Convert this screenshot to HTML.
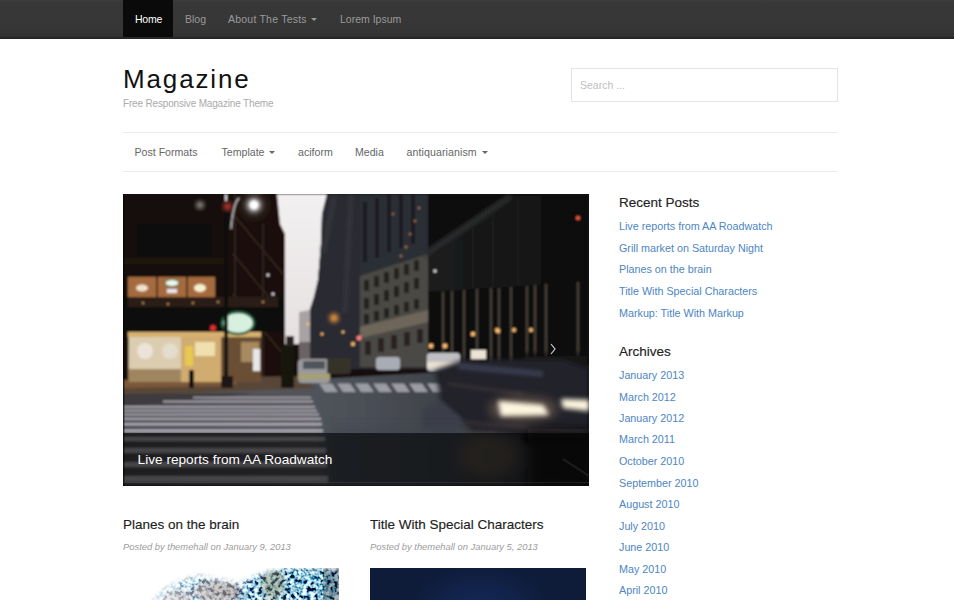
<!DOCTYPE html>
<html><head><meta charset="utf-8">
<style>
*{margin:0;padding:0;box-sizing:border-box}
html,body{width:954px;height:600px;overflow:hidden;background:#fff}
body{font-family:"Liberation Sans",sans-serif;position:relative}
.a{position:absolute;white-space:nowrap}
#nav{position:absolute;left:0;top:0;width:954px;height:39px;background:linear-gradient(#3c3c3c 0,#373737 3px,#363636 30px,#323232 36px);border-bottom:2px solid #262626}
#nav .home{position:absolute;left:123px;top:0;width:50px;height:37px;background:#0a0a0a}
.tn{font-size:10.5px;color:#9a9a9a;top:13px;line-height:12px}
.caret{display:inline-block;width:0;height:0;border-left:3px solid transparent;border-right:3px solid transparent;border-top:3px solid currentColor;vertical-align:middle;margin-left:4px;position:relative;top:-1px}
#title{left:123px;top:64px;font-size:26px;letter-spacing:1.85px;color:#111;line-height:30px}
#tag{left:123px;top:98px;font-size:10px;letter-spacing:-0.17px;color:#aaa;line-height:12px}
#search{position:absolute;left:571px;top:68px;width:267px;height:34px;border:1px solid #e4e4e4}
#search span{position:absolute;left:8px;top:10px;font-size:10.5px;color:#bdbdbd;line-height:12px}
.hr{position:absolute;left:123px;width:715px;height:1px;background:#ececec}
.sn{font-size:10.6px;color:#666;top:146px;line-height:12px}
#slider{position:absolute;left:123px;top:194px;width:466px;height:292px;background:#111;overflow:hidden}
.wh{font-size:13.5px;color:#222;line-height:16px;-webkit-text-stroke:0.15px #222}
.ln{font-size:10.75px;color:#4d86c2;line-height:12px}
.meta{font-size:9.4px;color:#9c9c9c;font-style:italic;line-height:12px}
</style></head><body>
<div id="nav"><div class="home"></div></div>
<div class="a tn" style="left:135px;color:#fff;letter-spacing:-0.25px">Home</div>
<div class="a tn" style="left:185px">Blog</div>
<div class="a tn" style="left:228px"><span style="letter-spacing:0.22px">About The Tests</span><span class="caret"></span></div>
<div class="a tn" style="left:340px">Lorem Ipsum</div>

<div class="a" id="title">Magazine</div>
<div class="a" id="tag">Free Responsive Magazine Theme</div>
<div id="search"><span>Search ...</span></div>
<div class="hr" style="top:132px"></div>
<div class="hr" style="top:171px"></div>
<div class="a sn" style="left:134.5px">Post Formats</div>
<div class="a sn" style="left:221.5px">Template<span class="caret" style="margin-left:4.5px"></span></div>
<div class="a sn" style="left:298px">aciform</div>
<div class="a sn" style="left:355px">Media</div>
<div class="a sn" style="left:406.5px"><span style="letter-spacing:0.1px">antiquarianism</span><span class="caret" style="margin-left:5px"></span></div>

<div id="slider"><svg width="466" height="292" viewBox="0 0 466 292" style="display:block">
<defs>
<filter id="b1" x="0" y="0" width="100%" height="100%"><feGaussianBlur stdDeviation="0.9"/></filter>
<filter id="b2" x="-100%" y="-100%" width="300%" height="300%"><feGaussianBlur stdDeviation="2"/></filter>
<filter id="b3" x="-150%" y="-150%" width="400%" height="400%"><feGaussianBlur stdDeviation="4"/></filter>
<filter id="b5" x="-100%" y="-200%" width="300%" height="500%"><feGaussianBlur stdDeviation="6"/></filter>
<linearGradient id="sky" x1="0" y1="0" x2="0" y2="1">
<stop offset="0" stop-color="#f2f0f1"/><stop offset="1" stop-color="#e6e0e0"/></linearGradient>
<linearGradient id="bldR" gradientUnits="userSpaceOnUse" x1="176" y1="0" x2="466" y2="0">
<stop offset="0" stop-color="#2c2b32"/><stop offset="0.45" stop-color="#2a2b33"/><stop offset="0.75" stop-color="#1a1819"/><stop offset="1" stop-color="#100e0e"/></linearGradient>
<linearGradient id="street" x1="0" y1="0" x2="1" y2="0">
<stop offset="0" stop-color="#5e6068"/><stop offset="0.5" stop-color="#4c5058"/><stop offset="1" stop-color="#2a2b30"/></linearGradient>
<linearGradient id="cw" x1="0" y1="0" x2="1" y2="0">
<stop offset="0" stop-color="#4c4a50"/><stop offset="1" stop-color="#56545a"/></linearGradient>
<linearGradient id="car" x1="0" y1="0" x2="0" y2="1">
<stop offset="0" stop-color="#3c3f46"/><stop offset="1" stop-color="#1c1d20"/></linearGradient>
</defs>
<g filter="url(#b1)">
<rect x="0" y="0" width="466" height="292" fill="#131110"/>
<!-- left building -->
<polygon points="0,0 155,0 157,30 161,40 161,200 0,200" fill="#150e0b"/>
<rect x="14" y="30" width="75" height="32" fill="#0c0908"/>
<rect x="0" y="64" width="161" height="6" fill="#1e150f"/>
<rect x="106" y="0" width="55" height="200" fill="#1c110d"/>
<g stroke="#3a2c24" stroke-width="1.2" fill="none">
<line x1="110" y1="20" x2="160" y2="80"/><line x1="110" y1="60" x2="160" y2="120"/><line x1="110" y1="100" x2="160" y2="160"/>
<line x1="112" y1="0" x2="112" y2="190"/><line x1="140" y1="30" x2="140" y2="190"/>
</g>
<circle cx="77" cy="11" r="3.5" fill="#a09c98" filter="url(#b2)"/>
<!-- sky -->
<polygon points="154,0 204,0 199,20 198,50 195,86 191,103 186,118 176,118 176,150 162,150 162,40 157,30" fill="url(#sky)"/>
<!-- distant buildings near vanishing point -->
<polygon points="176,118 187,116 187,165 176,165" fill="#a8a2a4"/>
<polygon points="176,148 187,148 187,165 176,165" fill="#6a6264"/>
<rect x="163" y="142" width="8" height="25" fill="#2a2424"/>
<!-- right tall building A -->
<polygon points="204,0 466,0 466,175 187,175 187,116 191,103 195,86 198,50 199,20" fill="url(#bldR)"/>
<g stroke="#3e4048" stroke-width="3" opacity="0.6" filter="url(#b2)">
<line x1="212" y1="0" x2="200" y2="60"/><line x1="228" y1="0" x2="222" y2="120"/>
</g>
<!-- building B -->
<polygon points="237,0 305,0 305,173 237,173" fill="#2c2e36"/>
<g fill="#1c1d22"><rect x="240" y="8" width="4" height="60"/><rect x="252" y="4" width="4" height="60"/><rect x="264" y="0" width="4" height="58"/><rect x="276" y="0" width="4" height="54"/><rect x="288" y="0" width="4" height="50"/></g>
<g fill="#b07a48" opacity="0.85">
<circle cx="283" cy="53" r="1.5"/><circle cx="287" cy="40" r="1.3"/><circle cx="292" cy="27" r="1.3"/><circle cx="296" cy="14" r="1.3"/><circle cx="278" cy="62" r="1.3"/><circle cx="270" cy="20" r="1.2"/>
</g>
<polygon points="237,82 305,60 305,173 237,173" fill="#4c4844"/>
<g fill="#24201e">
<rect x="241" y="86" width="5" height="11"/><rect x="251" y="82" width="5" height="11"/><rect x="261" y="78" width="5" height="11"/><rect x="271" y="74" width="5" height="11"/><rect x="281" y="70" width="5" height="11"/><rect x="291" y="66" width="5" height="11"/>
<rect x="241" y="104" width="5" height="11"/><rect x="251" y="100" width="5" height="11"/><rect x="261" y="96" width="5" height="11"/><rect x="271" y="92" width="5" height="11"/><rect x="281" y="88" width="5" height="11"/><rect x="291" y="84" width="5" height="11"/>
<rect x="241" y="120" width="5" height="10"/><rect x="251" y="117" width="5" height="10"/><rect x="261" y="114" width="5" height="10"/><rect x="271" y="111" width="5" height="10"/><rect x="281" y="108" width="5" height="10"/><rect x="291" y="105" width="5" height="10"/>
</g>
<polygon points="237,133 305,116 305,128 237,144" fill="#6e665a"/>
<g fill="#2a2420">
<rect x="242" y="147" width="6" height="14"/><rect x="255" y="144" width="6" height="14"/><rect x="268" y="141" width="6" height="14"/><rect x="281" y="138" width="6" height="14"/><rect x="294" y="135" width="6" height="14"/>
</g>
<!-- far right dark scaffolding building C -->
<defs><linearGradient id="cov" gradientUnits="userSpaceOnUse" x1="305" y1="0" x2="466" y2="0"><stop offset="0" stop-color="#1c1d1d"/><stop offset="0.6" stop-color="#141414"/><stop offset="1" stop-color="#0b0b0b"/></linearGradient></defs>
<polygon points="305,0 466,0 466,180 305,180" fill="#0c0b0b"/>
<polygon points="305,58 386,2 466,0 466,88 305,98" fill="url(#cov)"/>
<line x1="302" y1="60" x2="388" y2="2" stroke="#2c2e2e" stroke-width="6" filter="url(#b2)"/>
<g stroke="#1e2020" stroke-width="1.2"><line x1="330" y1="45" x2="330" y2="95"/><line x1="350" y1="32" x2="350" y2="94"/><line x1="370" y1="18" x2="370" y2="93"/><line x1="395" y1="5" x2="395" y2="91"/></g>
<circle cx="312" cy="77" r="1.6" fill="#f0f0f0"/>
<polygon points="305,98 466,88 466,95 305,106" fill="#080808"/>
<g stroke="#6a5e50" stroke-width="1.3">
<line x1="320" y1="98" x2="320" y2="172"/><line x1="329" y1="97" x2="329" y2="172"/><line x1="341" y1="96" x2="341" y2="172"/><line x1="354" y1="95" x2="354" y2="172"/><line x1="368" y1="94" x2="368" y2="172"/><line x1="376" y1="94" x2="376" y2="172"/><line x1="388" y1="93" x2="388" y2="172"/><line x1="404" y1="92" x2="404" y2="172"/><line x1="412" y1="91" x2="412" y2="172"/><line x1="423" y1="90" x2="423" y2="172"/><line x1="455" y1="88" x2="455" y2="172"/>
</g>
<!-- street -->
<polygon points="0,196 466,170 466,292 0,292" fill="url(#street)"/>
<!-- sidewalk -->
<polygon points="0,186 176,182 192,194 0,202" fill="#584638"/>
<polygon points="0,186 120,184 110,192 0,194" fill="#7a5838"/>
<!-- crosswalk left -->
<polygon points="0,202 186,198 205,292 0,292" fill="url(#cw)"/>
<polygon points="0,200 130,199 60,208 0,212" fill="#3e3a3c"/>
<g fill="#acaab2">
<rect x="70" y="202.8" width="118" height="1.5"/>
<rect x="40" y="206.6" width="150" height="1.8"/>
<rect x="0" y="212" width="192" height="1.8"/>
<rect x="0" y="215.8" width="194" height="1.8"/>
<rect x="0" y="219.6" width="196" height="1.9"/>
<rect x="0" y="223.9" width="198" height="2"/>
<rect x="0" y="228.9" width="199" height="2.6"/>
<rect x="0" y="235.3" width="200" height="3"/>
<rect x="0" y="243" width="202" height="4"/>
<rect x="0" y="254" width="203" height="5"/>
<rect x="0" y="268" width="204" height="5"/>
<rect x="0" y="282" width="205" height="6"/>
</g>
<!-- crosswalk right street -->
<g fill="#9c9ca4"><polygon points="196,189.5 209,189.5 215,198 202,198"/><polygon points="214,189.5 227,189.5 233,198 220,198"/><polygon points="232,189.5 245,189.5 251,198 238,198"/><polygon points="250,189.5 263,189.5 269,198 256,198"/><polygon points="268,189.5 281,189.5 287,198 274,198"/><polygon points="286,189.5 299,189.5 305,198 292,198"/><polygon points="304,189.5 317,189.5 323,198 310,198"/></g>

<!-- upper band -->
<rect x="0" y="103" width="161" height="35" fill="#110d0a"/><rect x="5" y="103" width="150" height="10" fill="#2a1e16"/>
<g fill="#b08858"><circle cx="20" cy="109" r="1.2"/><circle cx="45" cy="110" r="1.2"/><circle cx="70" cy="109" r="1.2"/><circle cx="95" cy="108" r="1.2"/><circle cx="140" cy="108" r="1.2"/></g>
<!-- shop window -->
<rect x="5" y="138" width="133" height="50" fill="#7a6044"/>
<rect x="5" y="138" width="133" height="5" fill="#d8b070"/>
<rect x="6" y="143" width="52" height="32" fill="#dccdb0"/>
<circle cx="22" cy="157" r="8" fill="#ece4d8"/><circle cx="47" cy="157" r="8" fill="#e4dccc"/>
<rect x="6" y="175" width="52" height="13" fill="#a08660"/>
<rect x="58" y="143" width="42" height="45" fill="#d0ac70"/><rect x="72" y="148" width="20" height="14" fill="#f0e0b0"/>
<rect x="62" y="152" width="8" height="20" fill="#e8c850"/>
<rect x="98" y="143" width="40" height="45" fill="#6a5034"/>
<rect x="118" y="148" width="18" height="20" fill="#a88a60"/>
<rect x="130" y="155" width="7" height="22" fill="#e8e8e8"/>
<!-- signs -->
<rect x="5" y="83" width="87" height="20" fill="#a56a3c"/>
<rect x="33" y="83" width="2" height="20" fill="#4a3020"/><rect x="63" y="83" width="2" height="20" fill="#4a3020"/>
<ellipse cx="19" cy="94" rx="6" ry="3.5" fill="#f0e0d0"/>
<ellipse cx="49" cy="89" rx="7" ry="3.5" fill="#eef6ee" stroke="#2a6a3a" stroke-width="1"/>
<rect x="44" y="95" width="10" height="4" fill="#e8e8f0"/>
<ellipse cx="77" cy="94" rx="6" ry="4" fill="#f4f0d0"/>
<!-- green sign -->
<ellipse cx="115" cy="129" rx="16" ry="11" fill="#d8f0e0" stroke="#1e5a3a" stroke-width="2.5"/>
<circle cx="90" cy="134" r="3" fill="#e03030"/>
<!-- lamp post -->
<rect x="101" y="0" width="4" height="192" fill="#0c0a08"/><rect x="102" y="0" width="2" height="7" fill="#d8d8d8"/><circle cx="145" cy="81" r="1.5" fill="#e8e8e8"/><circle cx="150" cy="100" r="1.5" fill="#e8e8e8"/>
<rect x="101" y="9" width="7" height="7" fill="#c83a3a" filter="url(#b2)"/>
<path d="M108,35 Q110,10 116,4" stroke="#d0d0d0" stroke-width="1.3" fill="none"/>
<rect x="98" y="182" width="12" height="12" fill="#1a1614"/>
<!-- people -->
<rect x="158" y="152" width="13" height="42" fill="#18130f"/>
<rect x="66" y="176" width="5" height="18" fill="#141010"/>
<!-- cars -->
<rect x="175" y="165" width="32" height="24" rx="4" fill="#9a9a9c"/>
<rect x="180" y="167" width="22" height="8" fill="#50555a"/>
<rect x="175" y="180" width="32" height="5" fill="#a8a070"/>
<rect x="204" y="164" width="24" height="16" rx="3" fill="#35302c"/>
<rect x="253" y="163" width="24" height="13" rx="3" fill="#a8acb4"/>
<rect x="304" y="159" width="33" height="18" rx="3" fill="#c0c0c4"/>
<rect x="304" y="168" width="33" height="6" fill="#e8e0d0"/>
<!-- moving car blur -->
<polygon points="400,160 466,160 466,250 400,250" fill="#161516" filter="url(#b2)"/>
<polygon points="312,176 342,165 440,165 466,175 466,246 350,238 318,208" fill="#23242a" filter="url(#b2)"/>
<g stroke="#4a5068" stroke-width="5" opacity="0.75" filter="url(#b2)"><line x1="335" y1="172" x2="420" y2="180"/></g>
<g stroke="#5a4a44" stroke-width="2" opacity="0.7" filter="url(#b2)"><line x1="325" y1="190" x2="400" y2="200"/><line x1="340" y1="228" x2="460" y2="238"/></g>
<polygon points="300,215 318,208 340,225 330,238 300,238" fill="#3a3e48" filter="url(#b2)"/>
<!-- headlights -->
<ellipse cx="400" cy="215" rx="34" ry="11" fill="#b09070" opacity="0.5" filter="url(#b5)"/>
<polygon points="375,207 420,211 426,221 378,222" fill="#fff6e0" filter="url(#b2)"/>
<polygon points="438,205 466,206 466,217 440,214" fill="#fff6e0" filter="url(#b2)"/>
<!-- lights -->
<circle cx="131" cy="11" r="9" fill="#fff" opacity="0.35" filter="url(#b3)"/>
<circle cx="131" cy="11" r="6" fill="#f4f4f4" opacity="0.9" filter="url(#b2)"/>
<circle cx="131" cy="11" r="4.2" fill="#fff"/>
<circle cx="211" cy="124" r="4" fill="#ffa040" filter="url(#b2)"/>
<g fill="#ffc070">
<circle cx="308" cy="152" r="2.4"/><circle cx="322" cy="152" r="2.4"/><circle cx="350" cy="140" r="2.2"/><circle cx="375" cy="137" r="2.2"/><circle cx="374" cy="136" r="2"/><circle cx="391" cy="136" r="2"/><circle cx="408" cy="136" r="2"/>
<circle cx="230" cy="150" r="2"/><circle cx="185" cy="130" r="1.5"/><circle cx="199" cy="140" r="1.5"/><circle cx="220" cy="138" r="1.5"/>
</g>
<rect x="348" y="156" width="15" height="9" fill="#ece4d4"/>
<circle cx="236" cy="144" r="2.5" fill="#ff8080"/>
<circle cx="455" cy="24" r="2" fill="#ff6040"/>
</g>
<g filter="url(#b5)"><polygon points="205,235 340,235 340,296 212,296" fill="#3c424e" opacity="0.6"/>
<ellipse cx="365" cy="262" rx="30" ry="22" fill="#6a5e50" opacity="0.6"/>
<polygon points="405,235 470,235 470,296 405,296" fill="#0e0e0e" opacity="0.8"/></g>
<line x1="440" y1="265" x2="466" y2="282" stroke="#6a6a6a" stroke-width="2" opacity="0.6"/>
<rect x="0" y="0" width="1.5" height="292" fill="#000" opacity="0.5"/>
<!-- caption overlay -->
<rect x="0" y="239" width="466" height="53" fill="#000" opacity="0.6"/>
<rect x="0" y="288" width="466" height="1" fill="#fff" opacity="0.08"/>
<text x="14.6" y="269.6" font-family="Liberation Sans" font-size="13.65" fill="#fff">Live reports from AA Roadwatch</text>
<polyline points="428,150 432,155 428,160" fill="none" stroke="#cfcfcf" stroke-width="1.2"/>
</svg></div>

<div class="a wh" style="left:619px;top:195px">Recent Posts</div>
<div class="a ln" style="left:619px;top:219.6px">Live reports from AA Roadwatch</div>
<div class="a ln" style="left:619px;top:241.6px">Grill market on Saturday Night</div>
<div class="a ln" style="left:619px;top:262.6px">Planes on the brain</div>
<div class="a ln" style="left:619px;top:284.6px">Title With Special Characters</div>
<div class="a ln" style="left:619px;top:306.6px">Markup: Title With Markup</div>

<div class="a wh" style="left:619px;top:344px">Archives</div>
<div class="a ln" style="left:619px;top:368.6px">January 2013</div>
<div class="a ln" style="left:619px;top:390.6px">March 2012</div>
<div class="a ln" style="left:619px;top:411.6px">January 2012</div>
<div class="a ln" style="left:619px;top:432.6px">March 2011</div>
<div class="a ln" style="left:619px;top:454.6px">October 2010</div>
<div class="a ln" style="left:619px;top:476.6px">September 2010</div>
<div class="a ln" style="left:619px;top:497.6px">August 2010</div>
<div class="a ln" style="left:619px;top:519.6px">July 2010</div>
<div class="a ln" style="left:619px;top:540.6px">June 2010</div>
<div class="a ln" style="left:619px;top:562.6px">May 2010</div>
<div class="a ln" style="left:619px;top:583.6px">April 2010</div>

<div class="a wh" style="left:123px;top:517px">Planes on the brain</div>
<div class="a meta" style="left:123px;top:541px">Posted by themehall on January 9, 2013</div>
<div class="a wh" style="left:370px;top:517px">Title With Special Characters</div>
<div class="a meta" style="left:370px;top:541px">Posted by themehall on January 5, 2013</div>
<div style="position:absolute;left:123px;top:568px;width:217px;height:32px;overflow:hidden" id="img1"><svg width="217" height="32" style="display:block"><defs><filter id="tn" x="0" y="0" width="100%" height="100%"><feTurbulence type="fractalNoise" baseFrequency="0.25" numOctaves="2" seed="7"/><feColorMatrix type="matrix" values="2.9 0 0 0 -1.2  3.3 0 0 0 -1.15  3.3 0 0 0 -1.0  0 0 0 0 1"/></filter><filter id="tb" x="-20%" y="-50%" width="140%" height="200%"><feGaussianBlur stdDeviation="2.5"/></filter><mask id="tm"><polygon points="28,34 40,22 55,14 77,8 95,12 115,16 128,11 140,6 157,1 217,1 217,34" fill="#fff" filter="url(#tb)"/></mask><linearGradient id="tw" x1="0" y1="0" x2="1" y2="0"><stop offset="0" stop-color="#fff" stop-opacity="1"/><stop offset="0.25" stop-color="#fff" stop-opacity="0.55"/><stop offset="0.6" stop-color="#fff" stop-opacity="0.1"/><stop offset="1" stop-color="#fff" stop-opacity="0"/></linearGradient></defs><rect width="217" height="32" fill="#fff"/><g mask="url(#tm)"><rect width="217" height="32" filter="url(#tn)"/><ellipse cx="150" cy="16" rx="12" ry="16" fill="#7a6a3a" opacity="0.4" filter="url(#tb)"/><ellipse cx="95" cy="24" rx="24" ry="12" fill="#9a5a48" opacity="0.45" filter="url(#tb)"/><ellipse cx="55" cy="30" rx="14" ry="8" fill="#8a5040" opacity="0.4" filter="url(#tb)"/><rect x="200" y="0" width="17" height="32" fill="#101418" opacity="0.35"/></g><rect width="217" height="32" fill="url(#tw)"/><rect x="216" y="0" width="1" height="32" fill="#fff"/></svg></div>
<div style="position:absolute;left:370px;top:568px;width:216px;height:32px;background:radial-gradient(ellipse 70px 45px at 110px 42px,#14295a 0%,#112349 55%,#0e1c3a 100%)" id="img2"></div>
</body></html>
